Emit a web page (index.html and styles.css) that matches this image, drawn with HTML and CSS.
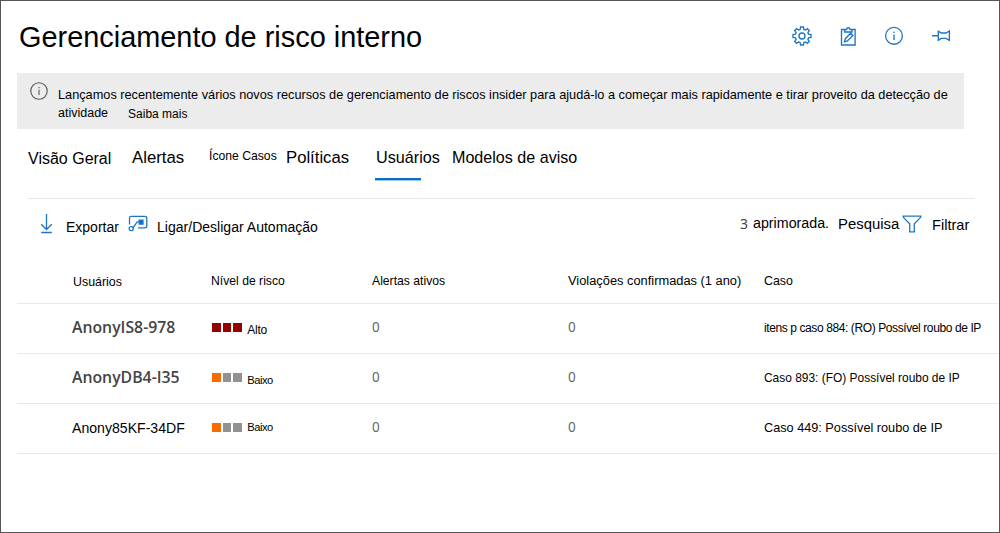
FILE: index.html
```html
<!DOCTYPE html>
<html lang="pt-BR">
<head>
<meta charset="utf-8">
<title>Gerenciamento de risco interno</title>
<link rel="stylesheet" href="styles.css">
</head>
<body>
<div class="page">
  <header class="header">
    <h1 class="title">Gerenciamento de risco interno</h1>
    <div class="actions">
      <svg width="20" height="20" viewBox="0 0 20 20"><path d="M8.6 1H11.4L11.9 3.5L13.4 4.1L15.4 2.7L17.3 4.6L15.9 6.6L16.5 8.1L19 8.6V11.4L16.5 11.9L15.9 13.4L17.3 15.4L15.4 17.3L13.4 15.9L11.9 16.5L11.4 19H8.6L8.1 16.5L6.6 15.9L4.6 17.3L2.7 15.4L4.1 13.4L3.5 11.9L1 11.4V8.6L3.5 8.1L4.1 6.6L2.7 4.6L4.6 2.7L6.6 4.1L8.1 3.5Z"/><circle cx="10" cy="10" r="3"/></svg>
      <svg width="20" height="20" viewBox="0 0 20 20"><path d="M6.8 3.5H3.5V19H17.1V3.5H13.8M6.6 6V3.5H8.6C8.8 1.2 11.8 1.2 12 3.5H14V6ZM6.5 15.7L7.3 12.7L12.7 7.3L14.9 9.4L9.4 14.9Z"/></svg>
      <svg width="20" height="20" viewBox="0 0 20 20"><circle cx="10" cy="9.8" r="8.4"/><path d="M10 8.5V14M10 5.7V7.1"/></svg>
      <svg width="20" height="20" viewBox="0 0 20 20"><path d="M1 9.7H7.3M7.3 4.4V15M7.3 5L10 7H15L18.4 5V14.4L15 12.4H10L7.3 14.4"/></svg>
    </div>
  </header>

  <section class="banner">
    <svg class="banner-icon" width="20" height="20" viewBox="0 0 20 20"><circle cx="10" cy="10" r="8.2"/><path d="M10 8.7V14M10 5.9V7.3"/></svg>
    <div class="banner-text">
      <p class="banner-main">Lançamos recentemente vários novos recursos de gerenciamento de riscos insider para ajudá-lo a começar mais rapidamente e tirar proveito da detecção de</p>
      <p class="banner-rest"><span class="banner-end">atividade</span><a class="banner-link">Saiba mais</a></p>
    </div>
  </section>

  <nav class="tabs">
    <a class="tab tab-overview">Visão Geral</a>
    <a class="tab tab-alerts">Alertas</a>
    <a class="tab tab-cases">Ícone Casos</a>
    <a class="tab tab-policies">Políticas</a>
    <a class="tab tab-users">Usuários</a>
    <a class="tab tab-templates">Modelos de aviso</a>
  </nav>

  <div class="toolbar">
    <svg class="tool-icon" width="20" height="22" viewBox="0 0 20 22"><path d="M10.5 0V15.5M5.2 10.2L10.5 15.5L15.8 10.2M5.2 18.5H15.8"/></svg>
    <span class="tool-export">Exportar</span>
    <svg class="tool-icon flow-icon" width="20" height="18" viewBox="0 0 20 18"><path d="M1.5 9.5V3.2Q1.5 1.4 3.3 1.4H16.8Q18.8 1.4 18.8 3.2V11.1Q18.8 12.9 16.8 12.9H10M5 12.8L9.2 6.8H12"/><circle cx="3.2" cy="13.7" r="2"/><path class="solid" d="M11.2 5.2H15V9H11.2Z"/></svg>
    <span class="tool-automation">Ligar/Desligar Automação</span>
    <span class="tool-count">3</span>
    <span class="tool-items">aprimorada.</span>
    <span class="tool-search">Pesquisa</span>
    <svg class="tool-icon filter-icon" width="20" height="20" viewBox="0 0 20 20"><path d="M1.2 2.2H18.8V3.1L12.3 9.8V17.8H7.7V9.8L1.2 3.1Z"/></svg>
    <span class="tool-filter">Filtrar</span>
  </div>

  <div class="table">
    <div class="row head">
      <span class="head-users">Usuários</span><span>Nível de risco</span><span>Alertas ativos</span><span class="head-violations">Violações confirmadas (1 ano)</span><span class="head-case">Caso</span>
    </div>
    <div class="row">
      <span class="user">AnonyIS8-978</span>
      <span class="risk high"><i></i><i></i><i></i><b class="risk-high">Alto</b></span>
      <span class="number">0</span><span class="number">0</span>
      <span class="case case-tight">itens p caso 884: (RO) Possível roubo de IP</span>
    </div>
    <div class="row">
      <span class="user">AnonyDB4-I35</span>
      <span class="risk low"><i></i><i></i><i></i><b>Baixo</b></span>
      <span class="number">0</span><span class="number">0</span>
      <span class="case case-mid">Caso 893: (FO) Possível roubo de IP</span>
    </div>
    <div class="row">
      <span class="user user-plain">Anony85KF-34DF</span>
      <span class="risk low"><i></i><i></i><i></i><b class="raised">Baixo</b></span>
      <span class="number">0</span><span class="number">0</span>
      <span class="case case-large">Caso 449: Possível roubo de IP</span>
    </div>
  </div>
</div>
</body>
</html>
```
FILE: styles.css
```css
* { box-sizing: border-box; }
body { margin: 0; background: #fff; color: #000; font-family: "Liberation Sans", Arial, sans-serif; }
.page { width: 1000px; height: 533px; border: 1px solid #555; overflow: hidden; }
span, a, p, b { line-height: 20px; white-space: nowrap; }
svg { fill: none; stroke: #1f74c4; stroke-width: 1.35; display: block; }

.header { display: flex; justify-content: space-between; height: 72px; padding: 16px 48px 0 18px; }
.title { margin: 0; font-size: 28.9px; font-weight: 400; line-height: 40px; white-space: nowrap; }
.actions { display: flex; gap: 26px; padding-top: 9px; }
.actions svg:nth-child(3) { margin-right: 1px; }

.banner { display: flex; width: 947px; height: 56px; margin-left: 16px; padding: 8px 0 0 12px; background: #ececec; }
.banner-icon { stroke: #555; stroke-width: 1.1; }
.banner-text { padding: 4px 0 0 9px; }
.banner-text p { margin: 0; }
.banner-main { font-size: 12.74px; }
.banner-text .banner-rest { display: flex; gap: 20px; margin-top: -2px; }
.banner-end { font-size: 12.5px; }
.banner-link { font-size: 12px; padding-top: 1px; }

.tabs { display: grid; grid-template-columns: 104px 77px 77px 90px 76px 130px; align-items: start; height: 70px; margin: 0 24px 0 27px; padding-top: 19px; border-bottom: 1px solid #e6e6e6; }
.tab { font-size: 16px; }
.tab-overview { padding-top: 1px; }
.tab-alerts { font-size: 16.8px; }
.tab-cases { margin-top: -2px; font-size: 12.2px; }
.tab-policies { font-size: 16.7px; }
.tab-users { margin-top: -1px; font-size: 16.2px; }
.tab-users::after { content: ""; display: block; width: 46px; height: 2px; margin: 11px 0 0 -1px; background: #0b6cca; border-bottom: 0; box-shadow: 0 1px 0 #9cc7ec; }
.tab-templates { margin-top: -1px; font-size: 16.1px; }

.toolbar { display: grid; grid-template-columns: 29px 62px 29px 583px 13px 85px 64px 30px 60px; align-items: start; height: 62px; padding: 15px 0 0 35px; }
.toolbar span { font-size: 14px; }
.tool-export, .tool-automation { padding: 3px 0 0 1px; }
.toolbar .tool-automation { font-size: 14.05px; }
.tool-icon { stroke-width: 1.3; }
.flow-icon { margin: 1px 0 0 1px; }
.solid { fill: #0b6cca; }
.toolbar .tool-count { padding: 0 0 0 1px; color: #444; font: 14px/20px "Noto Sans", sans-serif; }
.toolbar .tool-items { margin-top: -1px; padding-left: 1px; font-size: 14.25px; }
.toolbar .tool-search { padding-left: 1px; font-size: 14.9px; }
.filter-icon { margin: 0 0 0 1px; }
.toolbar .tool-filter { padding: 1px 0 0 1px; font-size: 14.6px; }

.table { width: 981px; margin-left: 16px; }
.row { display: grid; grid-template-columns: 139px 161px 196px 196px 1fr; align-items: start; height: 50px; padding: 13px 0 0 55px; border-bottom: 1px solid #e9e9e9; }
.head { height: 43px; padding-top: 10px; font-size: 12.2px; }
.head .head-users { padding: 1px 0 0 1px; font-size: 12.4px; }
.head .head-violations { font-size: 12.85px; }
.head .head-case { font-size: 12.4px; }
.user { color: #444; font: 600 15.8px/20px "Open Sans", sans-serif; }
.user-plain { padding-top: 1px; color: #000; font: 14.1px/20px "Liberation Sans", Arial, sans-serif; }
.risk { display: flex; gap: 2px; padding: 6px 0 0 1px; }
.risk i { width: 8.6px; height: 9px; background: #919191; }
.risk.high i { background: #960000; }
.risk.low i:first-child { background: #f76b00; }
.risk b { margin: -3px 0 -5px 3.5px; font-size: 11.2px; font-weight: 400; letter-spacing: -.5px; }
.risk .risk-high { font-size: 12px; letter-spacing: -.25px; }
.risk .raised { margin-top: -6px; }
.number { color: #666; font: 13.5px/20px "Noto Sans", sans-serif; }
.case-tight { padding-top: 1px; font-size: 12px; letter-spacing: -.4px; }
.case-mid { padding-top: 1px; font-size: 11.95px; }
.case-large { padding-top: 1px; font-size: 12.7px; }
```
